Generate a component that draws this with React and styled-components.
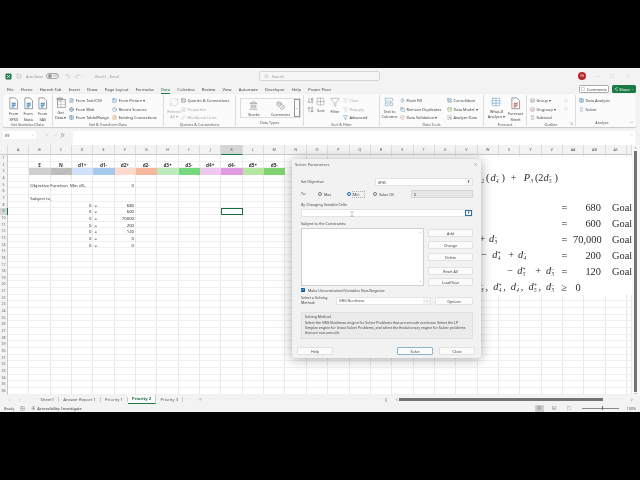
import React from 'react';
import styled, { createGlobalStyle } from 'styled-components';
import {
  Search, X, Minus, Square, Undo2, Redo2, Save, ChevronDown, ChevronUp, ChevronLeft, ChevronRight,
  MessageSquare, Landmark, Coins, Funnel, FunnelX, RefreshCw, Globe, Table, FileText, Image, Clock,
  Link, Zap, Copy, ShieldCheck, Combine, Database, ScanSearch, Plus, TextCursor, Check, Rows3,
  ListTree, ArrowDownAZ, ArrowUpZA, Layers, Grid2x2, LayoutPanelTop, Sigma, Share2, Accessibility,
  SquareArrowOutDownRight,
} from 'lucide-react';

const GlobalStyle = createGlobalStyle`
  * { box-sizing: border-box; }
  html, body { margin: 0; background: #000; }
  body { font-family: "Noto Sans", "Liberation Sans", sans-serif; color: #333; }
`;

const Letterbox = styled.div`
  width: 640px;
  height: 480px;
  padding: 68px 0;
  background: #000;
  overflow: hidden;
`;

const Excel = styled.div`
  position: relative;
  height: 344px;
  display: flex;
  flex-direction: column;
  background: #f3f3f3;
  filter: blur(0.25px);
`;

/* title bar */
const TitleBar = styled.div`
  height: 16px;
  flex: none;
  display: flex;
  align-items: center;
  padding-left: 5px;
  font-size: 3.9px;
  color: #9a9a9a;
`;

const Logo = styled.svg`
  width: 7px;
  height: 7px;
  margin-right: 4px;
`;

const AutoSave = styled.span`
  margin-left: 4px;
`;

const BookName = styled.span`
  margin-left: 12px;
`;

const Toggle = styled.div`
  width: 13px;
  height: 6px;
  margin: 0 6px 0 3px;
  padding-left: 1px;
  border: 0.5px solid #aaa;
  border-radius: 3px;
  display: flex;
  align-items: center;
  gap: 1px;
  font-size: 3px;
  &::before {
    content: '';
    width: 4px;
    height: 4px;
    border-radius: 50%;
    background: #999;
  }
`;

const SearchBox = styled.div`
  width: 121px;
  height: 10px;
  margin-left: 140px;
  padding-left: 4px;
  display: flex;
  align-items: center;
  gap: 3px;
  border: 0.5px solid #d5d5d5;
  border-radius: 2px;
  background: #f6f6f6;
`;

const Avatar = styled.div`
  width: 8px;
  height: 8px;
  margin-left: 198px;
  border-radius: 50%;
  background: #b3272d;
  color: #fff;
  font-size: 2.6px;
  line-height: 8px;
  text-align: center;
`;

const WindowButtons = styled.div`
  margin-left: 9px;
  display: flex;
  gap: 10px;
  color: #b5b5b5;
`;

/* tabs */
const TabBar = styled.div`
  height: 10px;
  flex: none;
  display: flex;
  align-items: center;
  padding-left: 7px;
  font-size: 4.1px;
  color: #444;
`;

const RibbonTab = styled.div`
  position: relative;
  margin-right: 7.3px;
  white-space: nowrap;
  ${(p) => p.$active && `
    color: #1d6b41;
    &::after {
      content: '';
      position: absolute;
      left: 0;
      right: 0;
      bottom: -2px;
      height: 1px;
      background: #1d7a47;
    }
  `}
`;

const TabActions = styled.div`
  margin-left: auto;
  padding-right: 4px;
  display: flex;
  align-items: center;
  gap: 3px;
`;

const Comments = styled.div`
  width: 30px;
  height: 8px;
  display: flex;
  align-items: center;
  justify-content: center;
  gap: 1.5px;
  border: 0.5px solid #aaa;
  border-radius: 1.5px;
  background: #fff;
  font-size: 3.9px;
`;

const Share = styled(Comments)`
  width: 24px;
  border: none;
  background: #197a43;
  color: #fff;
`;

/* ribbon */
const Ribbon = styled.div`
  height: 33px;
  flex: none;
  margin: 0 4px 0 3px;
  display: flex;
  background: #fbfbfb;
  border-radius: 2px;
  box-shadow: 0 0.5px 1px rgba(0, 0, 0, 0.18);
`;

const Group = styled.div`
  position: relative;
  width: ${(p) => p.$w}px;
  flex: ${(p) => (p.$w ? 'none' : 1)};
  display: flex;
  flex-direction: column;
  border-right: ${(p) => (p.$w ? '0.5px solid #dcdcdc' : 'none')};
  margin: 1px 0;
`;

const GroupBody = styled.div`
  flex: 1;
  display: flex;
  padding-left: ${(p) => p.$pad || 0}px;
`;

const GroupLabel = styled.div`
  height: 6px;
  font-size: 3.7px;
  line-height: 5px;
  text-align: center;
  color: #555;
  white-space: nowrap;
  padding-right: ${(p) => p.$pr || 0}px;
`;

const CornerIcon = styled.div`
  position: absolute;
  right: 2px;
  bottom: 1px;
  line-height: 0;
  color: #666;
`;

const Big = styled.div`
  width: ${(p) => p.$w || 14.5}px;
  flex: none;
  display: flex;
  flex-direction: column;
  align-items: center;
  padding-top: 2px;
  font-size: 3.8px;
  line-height: 5.6px;
  color: ${(p) => (p.$off ? '#a8a8a8' : '#444')};
  text-align: center;
  white-space: nowrap;
  svg { margin-bottom: 1.5px; flex: none; }
`;

const Stack = styled.div`
  display: flex;
  flex-direction: column;
  padding-top: 1.5px;
  width: ${(p) => p.$w}px;
  flex: none;
  margin-left: ${(p) => p.$ml || 0}px;
`;

const Small = styled.div`
  height: 8.6px;
  display: flex;
  align-items: center;
  gap: 1.5px;
  font-size: 3.9px;
  white-space: nowrap;
  color: ${(p) => (p.$off ? '#a8a8a8' : '#444')};
  svg { flex: none; }
`;

const TypesGallery = styled.div`
  width: 61px;
  height: 20px;
  margin: 3px 0 0 4px;
  display: flex;
  border: 0.5px solid #dcdcdc;
`;

const GalleryScroll = styled.div`
  margin-left: auto;
  width: 7px;
  display: flex;
  align-items: center;
  justify-content: center;
  border: 0.5px solid #999;
  color: #444;
`;

/* formula bar */
const FormulaBar = styled.div`
  height: 18px;
  flex: none;
  display: flex;
  align-items: flex-start;
  padding: 4px 5px 0 3px;
  color: #888;
`;

const NameBox = styled.div`
  width: 33px;
  height: 8px;
  display: flex;
  align-items: center;
  justify-content: space-between;
  padding: 0 1px 0 2px;
  background: #fff;
  font-size: 3.8px;
  color: #333;
`;

const FormulaTools = styled.div`
  width: 37px;
  height: 8px;
  display: flex;
  align-items: center;
  gap: 3.5px;
  padding-left: 9px;
  font-size: 4.4px;
`;

const FormulaInput = styled.div`
  flex: 1;
  height: 14px;
  display: flex;
  justify-content: flex-end;
  background: #fff;
  padding: 1px;
`;

/* sheet */
const SheetArea = styled.div`
  flex: 1;
  min-height: 0;
  display: flex;
`;

const SheetGrid = styled.div`
  width: 632.15px;
  display: grid;
  grid-template-columns: 8px repeat(29, 21.35px) 5px;
  grid-template-rows: 10px repeat(36, 6.667px);
  background: #fff;
  overflow: hidden;
`;

const ColHead = styled.div`
  font-size: 3.7px;
  line-height: 10px;
  text-align: center;
  color: #555;
  background: ${(p) => (p.$on ? '#d5d5d5' : '#f3f3f3')};
  border-right: 0.5px solid #dcdcdc;
  border-bottom: ${(p) => (p.$on ? '1px solid #1d7a47' : '0.5px solid #c9c9c9')};
`;

const RowHead = styled.div`
  font-size: 3.5px;
  line-height: 6.667px;
  text-align: center;
  color: ${(p) => (p.$on ? '#1d7a47' : '#666')};
  background: ${(p) => (p.$on ? '#d5d5d5' : '#f3f3f3')};
  border-right: ${(p) => (p.$on ? '1px solid #1d7a47' : '0.5px solid #c9c9c9')};
`;

const Cell = styled.div`
  position: relative;
  font-size: ${(p) => (p.$bold ? 4.7 : 4.3)}px;
  font-weight: ${(p) => (p.$bold ? 700 : 400)};
  line-height: 6.667px;
  padding: 0 1px;
  white-space: nowrap;
  text-align: ${(p) => p.$align || 'left'};
  color: #333;
  background: ${(p) => p.$fill || 'transparent'};
  border-right: ${(p) => (p.$fill || p.$flow ? 'none' : '1px solid #e9e9e9')};
  border-bottom: ${(p) => (p.$fill ? 'none' : '1px solid #f0f0f0')};
  ${(p) => p.$selected && 'outline: 1px solid #1d6b41; outline-offset: -1px;'}
`;

const VScroll = styled.div`
  flex: 1;
  display: flex;
  flex-direction: column;
  align-items: center;
  padding-top: 1px;
  background: #f8f8f8;
  color: #555;
`;

const VThumb = styled.div`
  flex: 1;
  width: 3px;
  margin: 1px 0 0 -1px;
  background: #747474;
`;

/* bottom */
const SheetTabs = styled.div`
  height: 9px;
  flex: none;
  display: flex;
  align-items: center;
  font-size: 4.2px;
  color: #555;
  background: #f3f3f3;
`;

const TabNav = styled.div`
  width: 36.5px;
  padding-left: 8px;
  display: flex;
  gap: 6px;
  color: #777;
`;

const SheetTab = styled.div`
  position: relative;
  padding: 0 4.1px;
  white-space: nowrap;
  border-right: 0.5px solid #ccc;
  ${(p) => p.$active && `
    font-weight: 700;
    color: #1d6b41;
    background: #fbfbfb;
    height: 9px;
    line-height: 8px;
    border-bottom: 1px solid #1d7a47;
  `}
`;

const AddSheet = styled.div`
  margin-left: 15px;
  line-height: 0;
  color: #777;
`;

const HScrollWrap = styled.div`
  position: absolute;
  left: 385px;
  right: 7px;
  display: flex;
  align-items: center;
  color: #444;
`;

const Splitter = styled.div`
  width: 2px;
  height: 4px;
  margin-right: 8px;
  background: #c4c4c4;
`;

const HThumb = styled.div`
  width: 204px;
  height: 3px;
  margin: 0 27px 0 0;
  background: #747474;
`;

const StatusBar = styled.div`
  height: 8px;
  flex: none;
  display: flex;
  align-items: center;
  padding-left: 4px;
  font-size: 3.6px;
  color: #555;
  gap: 6px;
`;

const StatusItem = styled.span`
  display: inline-flex;
  align-items: center;
  gap: 1.5px;
  color: #333;
  font-size: 3.9px;
`;

const StatusRight = styled.div`
  margin-left: auto;
  display: flex;
  align-items: center;
  gap: 6px;
  padding-right: 4px;
`;

const ViewButton = styled.div`
  width: 9px;
  height: 7px;
  display: flex;
  align-items: center;
  justify-content: center;
  background: ${(p) => (p.$on ? '#d0d0d0' : 'transparent')};
`;

const Slider = styled.div`
  position: relative;
  width: 37px;
  height: 0.6px;
  margin: 0 2px;
  background: #888;
  &::after {
    content: '';
    position: absolute;
    left: 20px;
    top: -2px;
    width: 1px;
    height: 4px;
    background: #666;
  }
`;

/* the pasted picture of the model */
const Picture = styled.div`
  position: absolute;
  left: 330px;
  top: 89px;
  width: 302px;
  height: 138px;
  background: #fff;
  padding-top: 13px;
  font-family: "Liberation Serif", "Times New Roman", serif;
  font-size: 10.4px;
  color: #2b2b2b;
`;

const MathRow = styled.div`
  height: 16px;
  display: grid;
  grid-template-columns: 228px 15px 28px 1fr;
  align-items: center;
  white-space: nowrap;
  margin-top: ${(p) => p.$mt || 0}px;
`;

const Expr = styled.div`
  text-align: right;
  padding-right: ${(p) => p.$pr ?? 2}px;
`;

const Space = styled.span`
  display: inline-block;
  width: ${(p) => p.$w}px;
`;

const Eq = styled.div`
  padding-left: 3.5px;
`;

const Val = styled.div`
  text-align: ${(p) => p.$align || 'right'};
`;

const Goal = styled.div`
  padding-left: 11px;
`;

const Italic = styled.i`
  font-style: italic;
`;

const Scripts = styled.span`
  display: inline-flex;
  flex-direction: column;
  align-items: flex-start;
  vertical-align: middle;
  width: 4.5px;
  font-size: 5.2px;
  line-height: 5.2px;
  margin-left: 0.3px;
  font-style: normal;
`;

const Blank = styled.span`
  height: 5.2px;
`;

/* solver dialog */
const Dialog = styled.div`
  position: absolute;
  left: 292px;
  top: 91px;
  width: 189px;
  height: 199px;
  background: #f2f2f2;
  border-radius: 3px;
  font-family: "Noto Sans", "Liberation Sans", sans-serif;
  font-size: 3.65px;
  color: #444;
  box-shadow: 0 1px 12px rgba(0, 0, 0, 0.35);
`;

const DialogTitle = styled.div`
  height: 11px;
  display: flex;
  align-items: center;
  justify-content: space-between;
  padding: 0 3px 0 3px;
  font-size: 4px;
  color: #555;
`;

const DialogBody = styled.div`
  display: flex;
  flex-direction: column;
  padding: 0 8px 0 9px;
`;

const Row = styled.div`
  display: flex;
  align-items: center;
  height: ${(p) => p.$h || 8}px;
  margin-top: ${(p) => p.$mt || 0}px;
`;

const RowLabel = styled.div`
  width: ${(p) => p.$w}px;
  flex: none;
  white-space: nowrap;
  line-height: 4.8px;
`;

const Field = styled.div`
  position: relative;
  flex: ${(p) => (p.$w ? 'none' : 1)};
  width: ${(p) => (p.$w ? `${p.$w}px` : 'auto')};
  height: 8px;
  display: flex;
  align-items: center;
  padding-left: 2px;
  background: ${(p) => (p.$off ? '#e6e6e6' : '#fff')};
  border: 0.5px solid ${(p) => (p.$off ? '#d5d5d5' : '#e4e4e4')};
  margin-left: ${(p) => p.$ml || 0}px;
`;

const Picker = styled.div`
  margin-left: auto;
  width: 7px;
  height: 100%;
  display: flex;
  align-items: center;
  justify-content: center;
  border: ${(p) => (p.$focus ? '0.5px solid #2f6fa8' : 'none')};
  background: #f4f4f4;
  color: #222;
  font-size: 4px;
  font-weight: 700;
`;

const Radio = styled.span`
  width: 4px;
  height: 4px;
  flex: none;
  margin-right: 2px;
  margin-left: ${(p) => p.$ml || 0}px;
  border-radius: 50%;
  background: ${(p) => (p.$on ? '#fff' : '#fafafa')};
  border: ${(p) => (p.$on ? '1.2px solid #0d5ea8' : '0.5px solid #777')};
`;

const RadioText = styled.span`
  width: ${(p) => p.$w}px;
  flex: none;
  ${(p) => p.$focus && 'outline: 0.5px dotted #aaa;'}
`;

const Cursor = styled.div`
  position: absolute;
  left: 47px;
  top: 0.5px;
  color: #444;
  line-height: 0;
`;

const ConstraintArea = styled.div`
  display: flex;
  gap: 4px;
  height: 58px;
  margin-top: 1px;
`;

const ListBox = styled.div`
  width: 123px;
  flex: none;
  display: flex;
  justify-content: flex-end;
  background: #fff;
  border: 0.5px solid #cfcfcf;
`;

const ListScroll = styled.div`
  width: 5px;
  display: flex;
  flex-direction: column;
  justify-content: space-between;
  align-items: center;
  padding: 2px 0;
  color: #888;
`;

const SideButtons = styled.div`
  flex: 1;
  display: flex;
  flex-direction: column;
  justify-content: space-between;
  padding-top: 1px;
`;

const ButtonSet = styled.div`
  display: flex;
  flex-direction: column;
  gap: ${(p) => p.$gap}px;
`;

const DlgButton = styled.div`
  width: ${(p) => (p.$w ? `${p.$w}px` : 'auto')};
  height: 8px;
  flex: none;
  line-height: 7px;
  text-align: center;
  background: #fbfbfb;
  border: 0.5px solid ${(p) => (p.$primary ? '#8db4cc' : '#e2e2e2')};
  border-radius: 1px;
  margin-left: ${(p) => p.$ml || 0}px;
`;

const CheckBox = styled.span`
  width: 4px;
  height: 4px;
  margin-right: 3px;
  flex: none;
  display: inline-flex;
  align-items: center;
  justify-content: center;
  background: #0d5ea8;
  color: #fff;
`;

const MethodBox = styled.div`
  height: 27px;
  margin-top: 7px;
  padding: 2px 6px 2px 3px;
  background: #ebebeb;
  border: 0.5px solid #e0e0e0;
  font-size: 3.5px;
  line-height: 4.7px;
`;

const MethodTitle = styled.div`
  margin-bottom: 1.4px;
`;

const DialogFooter = styled.div`
  display: flex;
  align-items: center;
  margin-top: 8px;
  padding: 0 6px 0 5px;
`;

/* icons */
const Page = ({ c = '#2b7cb3', s = 11 }) => (
  <svg viewBox="0 0 12 14" width={s} height={s * 1.15}>
    <path d="M2 1h5.5L10.5 4v9H2z" fill="#fff" stroke="#777" strokeWidth="0.8" />
    <path d="M4 7h4.5M4 9h4.5M4 11h3" stroke={c} strokeWidth="1.2" />
  </svg>
);

const GetDataIcon = () => (
  <svg viewBox="0 0 14 14" width="11" height="11">
    <rect x="3" y="3" width="10" height="10" fill="#fff" stroke="#777" strokeWidth="0.8" />
    <path d="M3 6h10M3 9.5h10M7.5 3v10" stroke="#999" strokeWidth="0.5" />
    <ellipse cx="6" cy="2.5" rx="4" ry="1.5" fill="#bbb" stroke="#666" strokeWidth="0.6" />
  </svg>
);

const small = { size: 5, strokeWidth: 1.6 };

const BigButton = ({ icon, a, b, w, off }) => (
  <Big $w={w} $off={off}>
    {icon}
    <span>{a}</span>
    <span>{b}</span>
  </Big>
);

const SmallButton = ({ icon, label, off, color = '#2b6a9e' }) => (
  <Small $off={off}>
    {React.createElement(icon, { ...small, color: off ? '#bbb' : color })}
    {label}
  </Small>
);

const COLS = ['A', 'B', 'C', 'D', 'E', 'F', 'G', 'H', 'I', 'J', 'K', 'L', 'M', 'N', 'O', 'P', 'Q', 'R', 'S', 'T', 'U', 'V', 'W', 'X', 'Y', 'Z', 'AA', 'AB', 'AC', ''];

const FILLS = {
  B: '#d0d0d0', C: '#bdbdbd', D: '#cfe2f9', E: '#a6c8ec', F: '#fcd9cc', G: '#f6b89a',
  H: '#bdebbd', I: '#77d97e', J: '#eec8ee', K: '#e39be0', L: '#b5e69f', M: '#7fd46f',
};

const HEADS = { B: 'E', C: 'N', D: 'd1+', E: 'd1-', F: 'd2+', G: 'd2-', H: 'd3+', I: 'd3-', J: 'd4+', K: 'd4-', L: 'd5+', M: 'd5-' };

const VALUES = ['680', '600', '70000', '200', '120', '0', '0'];

const cellProps = (col, row) => {
  if (row === 2 && HEADS[col]) return { text: HEADS[col], $bold: true, $align: 'center' };
  if (row === 3 && FILLS[col]) return { $fill: FILLS[col] };
  if (row === 5 && col === 'B') return { text: 'Objective Function, Min d3-', $flow: true };
  if (row === 5 && col === 'C') return { $flow: true };
  if (row === 5 && col === 'F') return { text: '0', $align: 'right' };
  if (row === 7 && col === 'B') return { text: 'Subject to,' };
  if (row >= 8 && row <= 14) {
    if (col === 'D') return { text: '0', $align: 'right' };
    if (col === 'E') return { text: '=' };
    if (col === 'F') return { text: VALUES[row - 8], $align: 'right' };
  }
  if (row === 9 && col === 'K') return { $selected: true };
  return {};
};

const Sheet = () => (
  <SheetGrid>
    <ColHead />
    {COLS.map((c) => <ColHead key={c} $on={c === 'K'}>{c}</ColHead>)}
    {Array.from({ length: 36 }, (_, i) => i + 1).map((row) => (
      <React.Fragment key={row}>
        <RowHead $on={row === 9}>{row}</RowHead>
        {COLS.map((col) => {
          const { text, ...rest } = cellProps(col, row);
          return <Cell key={col} {...rest}>{text}</Cell>;
        })}
      </React.Fragment>
    ))}
  </SheetGrid>
);

const V = ({ n, up, down }) => (
  <>
    <Italic>{n}</Italic>
    <Scripts>
      {up ? <span>{up}</span> : <Blank />}
      <Italic>{down}</Italic>
    </Scripts>
  </>
);

const ModelPicture = () => (
  <Picture>
    <MathRow>
      <Expr $pr={0}>
        <V n="P" down="2" />(<Space $w={1} /><V n="d" up="−" down="4" /><Space $w={1} />)<Space $w={6} />+<Space $w={7} /><V n="P" down="3" />(2<V n="d" up="−" down="5" /><Space $w={1} />)
      </Expr>
    </MathRow>
    <MathRow $mt={13}>
      <Expr /><Eq>=</Eq><Val>680</Val><Goal>Goal</Goal>
    </MathRow>
    <MathRow>
      <Expr /><Eq>=</Eq><Val>600</Val><Goal>Goal</Goal>
    </MathRow>
    <MathRow>
      <Expr $pr={59}>+<Space $w={4} /><V n="d" up="−" down="3" /></Expr><Eq>=</Eq><Val>70,000</Val><Goal>Goal</Goal>
    </MathRow>
    <MathRow>
      <Expr $pr={30}>−<Space $w={5} /><V n="d" up="+" down="4" /><Space $w={6} />+<Space $w={4} /><V n="d" up="−" down="4" /></Expr><Eq>=</Eq><Val>200</Val><Goal>Goal</Goal>
    </MathRow>
    <MathRow>
      <Expr>−<Space $w={4} /><V n="d" up="+" down="5" /><Space $w={8} />+<Space $w={5} /><V n="d" up="−" down="5" /></Expr><Eq>=</Eq><Val>120</Val><Goal>Goal</Goal>
    </MathRow>
    <MathRow>
      <Expr>
        <V n="d" up="−" down="3" />,<Space $w={5} /><V n="d" up="+" down="4" />,<Space $w={5} /><V n="d" up="−" down="4" />,<Space $w={5} /><V n="d" up="+" down="5" />,<Space $w={5} /><V n="d" up="−" down="5" />
      </Expr>
      <Eq>≥</Eq><Val $align="left">&nbsp;0</Val>
    </MathRow>
  </Picture>
);

const SolverDialog = () => (
  <Dialog>
    <DialogTitle>
      Solver Parameters
      <X size={5} strokeWidth={1.4} />
    </DialogTitle>
    <DialogBody>
      <Row $mt={8}>
        <RowLabel $w={74}>Set Objective:</RowLabel>
        <Field>$F$5<Picker>⭱</Picker></Field>
      </Row>
      <Row $mt={4}>
        <RowLabel $w={17}>To:</RowLabel>
        <Radio /><RadioText $w={23}>Max</RadioText>
        <Radio $on /><RadioText $focus $w={11}>Min</RadioText>
        <Radio $ml={9} /><RadioText $w={24}>Value Of:</RadioText>
        <Field $off $ml={8}>0</Field>
      </Row>
      <Row $h={6} $mt={4}><RowLabel>By Changing Variable Cells:</RowLabel></Row>
      <Row $mt={1}>
        <Field>
          <Cursor><TextCursor size={6} strokeWidth={1} /></Cursor>
          <Picker $focus>⭱</Picker>
        </Field>
      </Row>
      <Row $h={6} $mt={4}><RowLabel>Subject to the Constraints:</RowLabel></Row>
      <ConstraintArea>
        <ListBox>
          <ListScroll>
            <ChevronUp size={3} strokeWidth={3} />
            <ChevronDown size={3} strokeWidth={3} />
          </ListScroll>
        </ListBox>
        <SideButtons>
          <ButtonSet $gap={4}>
            <DlgButton>Add</DlgButton>
            <DlgButton>Change</DlgButton>
            <DlgButton>Delete</DlgButton>
          </ButtonSet>
          <ButtonSet $gap={3}>
            <DlgButton>Reset All</DlgButton>
            <DlgButton>Load/Save</DlgButton>
          </ButtonSet>
        </SideButtons>
      </ConstraintArea>
      <Row $h={6} $mt={1}>
        <CheckBox><Check size={3.5} strokeWidth={4} /></CheckBox>
        Make Unconstrained Variables Non-Negative
      </Row>
      <Row $h={9} $mt={3}>
        <RowLabel $w={35}>Select a Solving<br />Method:</RowLabel>
        <Field $w={95}>
          GRG Nonlinear
          <Picker><ChevronDown size={4} strokeWidth={1.5} color="#777" /></Picker>
        </Field>
        <DlgButton $w={38} $ml={4}>Options</DlgButton>
      </Row>
      <MethodBox>
        <MethodTitle>Solving Method</MethodTitle>
        Select the GRG Nonlinear engine for Solver Problems that are smooth nonlinear. Select the LP Simplex engine for linear Solver Problems, and select the Evolutionary engine for Solver problems that are non-smooth.
      </MethodBox>
    </DialogBody>
    <DialogFooter>
      <DlgButton $w={36}>Help</DlgButton>
      <DlgButton $w={36} $ml={64} $primary>Solve</DlgButton>
      <DlgButton $w={36} $ml={6}>Close</DlgButton>
    </DialogFooter>
  </Dialog>
);

const App = () => (
  <Letterbox>
    <GlobalStyle />
    <Excel>
      <TitleBar>
        <Logo viewBox="0 0 14 14">
          <rect x="1" y="1" width="12" height="12" rx="2" fill="#1d7a47" />
          <path d="M4 4l6 6M10 4l-6 6" stroke="#fff" strokeWidth="1.6" />
        </Logo>
        <Save size={6} strokeWidth={1.2} color="#aaa" />
        <AutoSave>AutoSave</AutoSave>
        <Toggle>Off</Toggle>
        <Undo2 size={6} strokeWidth={1.4} color="#aaa" />
        <ChevronDown size={3} color="#aaa" />
        <Redo2 size={6} strokeWidth={1.4} color="#aaa" />
        <ChevronDown size={3} color="#aaa" />
        <BookName>Book1 - Excel</BookName>
        <SearchBox>
          <Search size={4.5} strokeWidth={1.5} />
          Search
        </SearchBox>
        <Avatar>HS</Avatar>
        <WindowButtons>
          <Minus size={5} strokeWidth={1.2} />
          <Square size={4.5} strokeWidth={1.2} />
          <X size={5} strokeWidth={1.2} />
        </WindowButtons>
      </TitleBar>

      <TabBar>
        {['File', 'Home', 'Haresh Tab', 'Insert', 'Draw', 'Page Layout', 'Formulas'].map((t) => (
          <RibbonTab key={t}>{t}</RibbonTab>
        ))}
        <RibbonTab $active>Data</RibbonTab>
        {['Colectica', 'Review', 'View', 'Automate', 'Developer', 'Help', 'Power Pivot'].map((t) => (
          <RibbonTab key={t}>{t}</RibbonTab>
        ))}
        <TabActions>
          <Comments><MessageSquare size={4} strokeWidth={1.5} />Comments</Comments>
          <Share><Share2 size={4} strokeWidth={1.5} />Share<ChevronDown size={3} /></Share>
        </TabActions>
      </TabBar>

      <Ribbon>
        <Group $w={49.7}>
          <GroupBody $pad={3.5}>
            <BigButton icon={<Page />} a="From" b="SPSS" />
            <BigButton icon={<Page />} a="From" b="Stata" />
            <BigButton icon={<Page />} a="From" b="SAS" />
          </GroupBody>
          <GroupLabel>Get Statistical Data</GroupLabel>
        </Group>
        <Group $w={111.3}>
          <GroupBody $pad={1}>
            <BigButton icon={<GetDataIcon />} a="Get" b="Data ▾" w={14} />
            <Stack $w={43} $ml={1.5}>
              <SmallButton icon={FileText} label="From Text/CSV" />
              <SmallButton icon={Globe} label="From Web" />
              <SmallButton icon={Table} label="From Table/Range" />
            </Stack>
            <Stack $w={45}>
              <SmallButton icon={Image} label="From Picture ▾" />
              <SmallButton icon={Clock} label="Recent Sources" />
              <SmallButton icon={FileText} label="Existing Connections" color="#c8862c" />
            </Stack>
          </GroupBody>
          <GroupLabel>Get &amp; Transform Data</GroupLabel>
        </Group>
        <Group $w={72}>
          <GroupBody $pad={3}>
            <BigButton icon={<RefreshCw size={10} strokeWidth={1} color="#bbb" />} a="Refresh" b="All ▾" w={14} off />
            <Stack $w={50}>
              <SmallButton icon={Rows3} label="Queries & Connections" color="#555" />
              <SmallButton icon={FileText} label="Properties" off />
              <SmallButton icon={Link} label="Workbook Links" off />
            </Stack>
          </GroupBody>
          <GroupLabel>Queries &amp; Connections</GroupLabel>
        </Group>
        <Group $w={68}>
          <GroupBody>
            <TypesGallery>
              <BigButton icon={<Landmark size={9} strokeWidth={1.1} />} a="Stocks" w={26} />
              <BigButton icon={<Coins size={9} strokeWidth={1.1} />} a="Currencies" w={27} />
              <GalleryScroll><ChevronDown size={3} strokeWidth={2.5} /></GalleryScroll>
            </TypesGallery>
          </GroupBody>
          <GroupLabel>Data Types</GroupLabel>
        </Group>
        <Group $w={76}>
          <GroupBody $pad={3}>
            <Stack $w={8}>
              <Small><ArrowDownAZ size={7} strokeWidth={1.2} /></Small>
              <Small><ArrowUpZA size={7} strokeWidth={1.2} /></Small>
            </Stack>
            <BigButton icon={<Grid2x2 size={9} strokeWidth={1} color="#777" />} a="Sort" w={12} />
            <BigButton icon={<Funnel size={10} strokeWidth={1} color="#777" />} a="Filter" w={16} />
            <Stack $w={30}>
              <SmallButton icon={FunnelX} label="Clear" off />
              <SmallButton icon={Funnel} label="Reapply" off />
              <SmallButton icon={Funnel} label="Advanced" />
            </Stack>
          </GroupBody>
          <GroupLabel>Sort &amp; Filter</GroupLabel>
        </Group>
        <Group $w={104}>
          <GroupBody $pad={2}>
            <BigButton icon={<LayoutPanelTop size={10} strokeWidth={1} color="#4b82ad" />} a="Text to" b="Columns" w={15} />
            <Stack $w={47} $ml={3}>
              <SmallButton icon={Zap} label="Flash Fill" />
              <SmallButton icon={Copy} label="Remove Duplicates" />
              <SmallButton icon={ShieldCheck} label="Data Validation  ▾" color="#b25a4a" />
            </Stack>
            <Stack $w={34}>
              <SmallButton icon={Combine} label="Consolidate" />
              <SmallButton icon={Database} label="Data Model ▾" color="#5f9e2f" />
              <SmallButton icon={ScanSearch} label="Analyze Data" color="#555" />
            </Stack>
          </GroupBody>
          <GroupLabel>Data Tools</GroupLabel>
        </Group>
        <Group $w={43}>
          <GroupBody $pad={3}>
            <BigButton icon={<Table size={10} strokeWidth={1} color="#3c7fb5" />} a="What-If" b="Analysis ▾" w={19} />
            <BigButton icon={<Page c="#c0504d" />} a="Forecast" b="Sheet" w={19} />
          </GroupBody>
          <GroupLabel>Forecast</GroupLabel>
        </Group>
        <Group $w={49}>
          <GroupBody $pad={3}>
            <Stack $w={28}>
              <SmallButton icon={Layers} label="Group ▾" color="#555" />
              <SmallButton icon={Layers} label="Ungroup ▾" color="#a64d4d" />
              <SmallButton icon={Sigma} label="Subtotal" color="#555" />
            </Stack>
            <Stack $w={8} $ml={6}>
              <Small><ListTree size={4} strokeWidth={1.4} color="#bbb" /></Small>
              <Small><ListTree size={4} strokeWidth={1.4} color="#bbb" /></Small>
            </Stack>
          </GroupBody>
          <GroupLabel>Outline</GroupLabel>
          <CornerIcon><SquareArrowOutDownRight size={3} strokeWidth={1.5} /></CornerIcon>
        </Group>
        <Group>
          <GroupBody $pad={3}>
            <Stack $w={40}>
              <SmallButton icon={Table} label="Data Analysis" />
              <SmallButton icon={Sigma} label="Solver" />
            </Stack>
          </GroupBody>
          <GroupLabel $pr={8}>Analyze</GroupLabel>
          <CornerIcon><ChevronDown size={5} strokeWidth={1.4} /></CornerIcon>
        </Group>
      </Ribbon>

      <FormulaBar>
        <NameBox>K9<ChevronDown size={4} strokeWidth={1.4} color="#777" /></NameBox>
        <FormulaTools>
          <X size={4.5} strokeWidth={1} />
          <Check size={4.5} strokeWidth={1} />
          <Italic>fx</Italic>
        </FormulaTools>
        <FormulaInput><ChevronUp size={5} strokeWidth={1.4} /></FormulaInput>
      </FormulaBar>

      <SheetArea>
        <Sheet />
        <VScroll>
          <ChevronUp size={3.5} strokeWidth={3} />
          <VThumb />
          <ChevronDown size={3.5} strokeWidth={3} />
        </VScroll>
      </SheetArea>

      <SheetTabs>
        <TabNav>
          <ChevronLeft size={4} strokeWidth={1.5} />
          <ChevronRight size={4} strokeWidth={1.5} />
        </TabNav>
        <SheetTab>Sheet1</SheetTab>
        <SheetTab>Answer Report 1</SheetTab>
        <SheetTab>Priority 1</SheetTab>
        <SheetTab $active>Priority 2</SheetTab>
        <SheetTab>Priority 3</SheetTab>
        <AddSheet><Plus size={4.5} strokeWidth={1.4} /></AddSheet>
        <HScrollWrap>
          <Splitter />
          <ChevronLeft size={3.5} strokeWidth={3} />
          <HThumb />
          <ChevronRight size={3.5} strokeWidth={3} />
        </HScrollWrap>
      </SheetTabs>

      <StatusBar>
        Ready
        <Grid2x2 size={5} strokeWidth={1.2} />
        <StatusItem><Accessibility size={4.5} strokeWidth={1.4} />Accessibility: Investigate</StatusItem>
        <StatusRight>
          <ViewButton $on><Grid2x2 size={4.5} strokeWidth={1.2} /></ViewButton>
          <ViewButton><LayoutPanelTop size={4.5} strokeWidth={1.2} /></ViewButton>
          <ViewButton><Square size={4.5} strokeWidth={1.2} /></ViewButton>
          <Slider />
          100%
        </StatusRight>
      </StatusBar>

      <ModelPicture />
      <SolverDialog />
    </Excel>
  </Letterbox>
);

export default App;
